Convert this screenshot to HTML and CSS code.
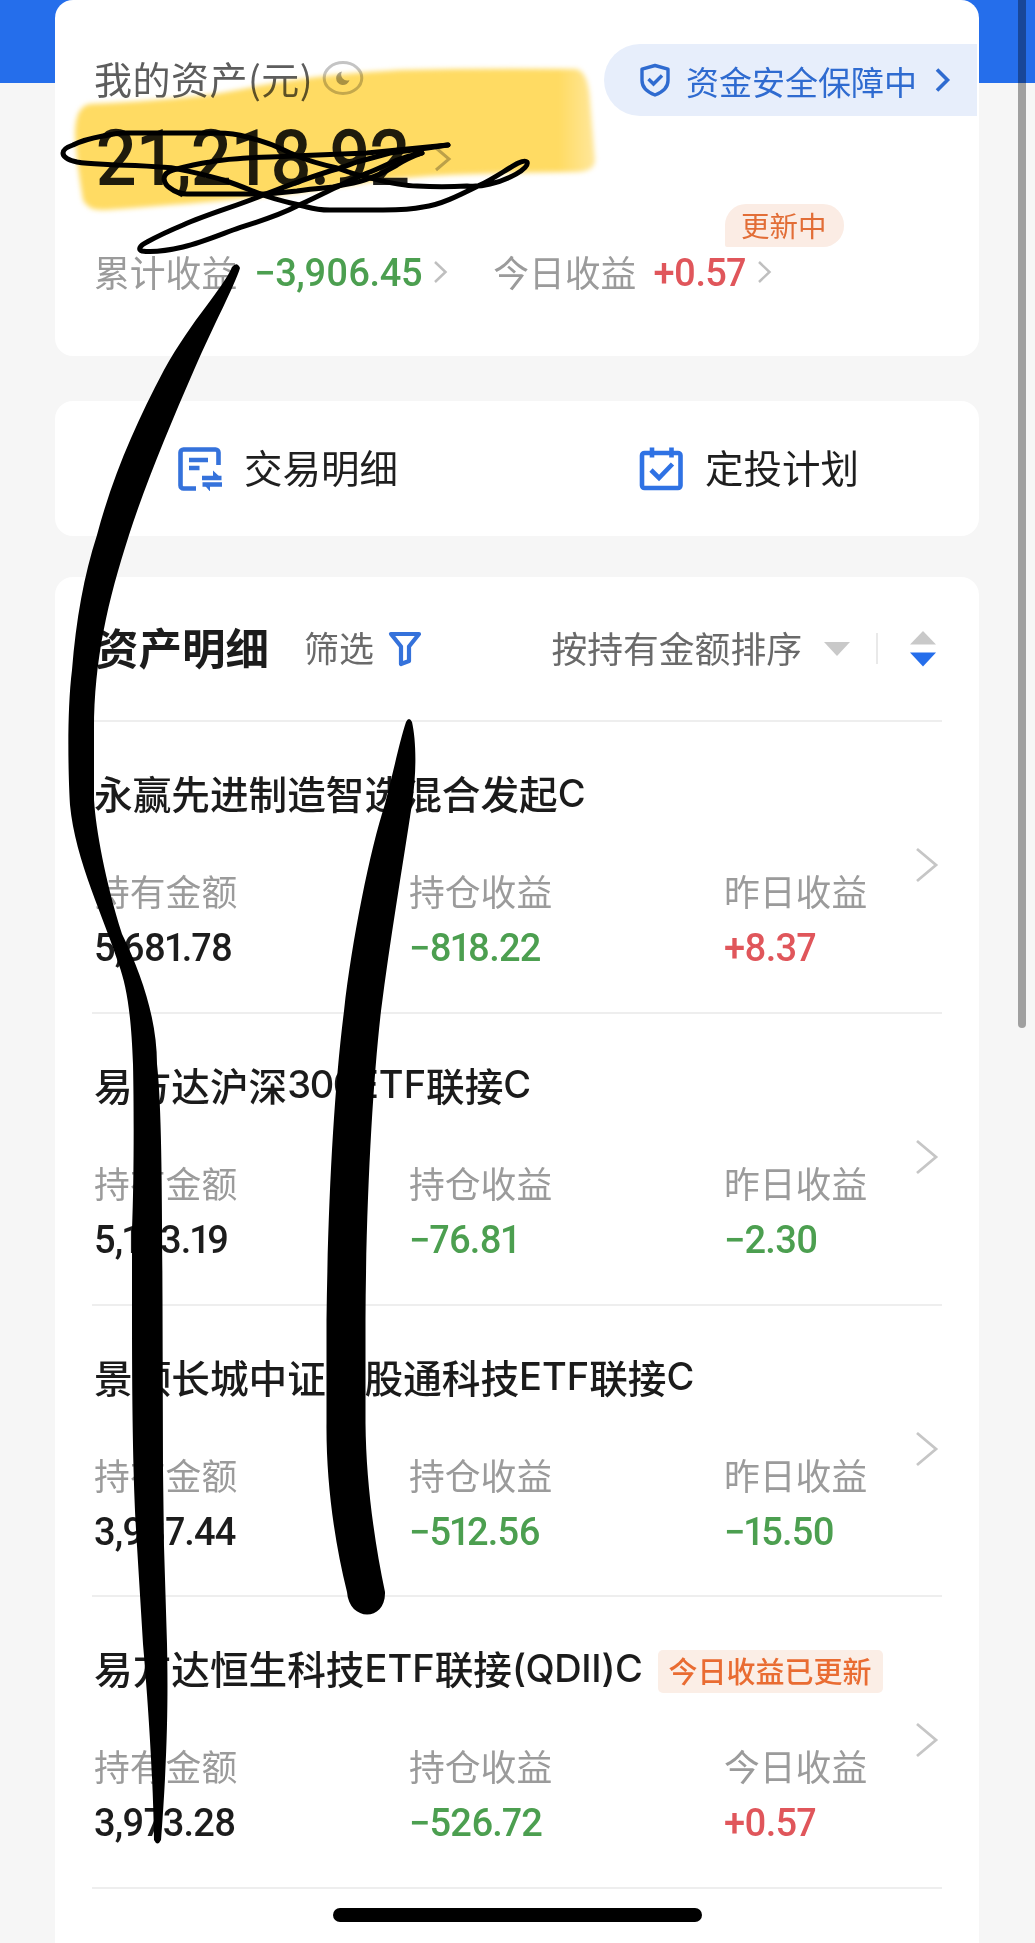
FILE: index.html
```html
<!DOCTYPE html>
<html lang="zh-CN">
<head>
<meta charset="utf-8">
<title>我的资产</title>
<link rel="stylesheet" href="styles.css">
</head>
<body>
<div class="screen">
  <main class="content">
    <section class="card summary">
      <div class="summary-top">
        <div class="total">
          <div class="total-label"><span>我的资产(元)</span>
            <svg class="eye" width="42" height="36" viewBox="0 0 42 36"><ellipse cx="21" cy="18" rx="18.8" ry="15.5" fill="none" stroke="#c4c4c4" stroke-width="3"/><path d="M20 11.500a6.800 6.800 0 1 0 7.500 8.500a6 6 0 0 1-7.500-8.500z" fill="#a9a9a9"/></svg>
          </div>
          <div class="total-value"><span class="big">21,218.92</span>
            <svg class="big-arrow" width="18" height="26" viewBox="0 0 18 26"><path d="M2 2l13 11L2 24" fill="none" stroke="#bbb" stroke-width="3"/></svg>
          </div>
        </div>
        <a class="safe">
          <svg width="32" height="34" viewBox="0 0 32 34" fill="none" stroke="#2f6bd0" stroke-width="3.400"><path d="M16 2.500l13 3.700v11.300c0 7-5 11.500-13 14.500C8 29 3 24.500 3 17.500V6.200z" stroke-linejoin="round"/><path d="M9.500 16l5 5 8.500-8.500"/></svg>
          <span>资金安全保障中</span>
          <svg class="safe-arrow" width="16" height="26" viewBox="0 0 16 26"><path d="M2 2.500l10.500 10.500L2 23.500" fill="none" stroke="#2f6bd0" stroke-width="3.600"/></svg>
        </a>
      </div>
      <div class="summary-row">
        <span class="label">累计收益</span><span class="num down total-gain">−3,906.45</span>
        <svg class="sm-arrow" width="15" height="24" viewBox="0 0 15 24"><path d="M2 2l10.500 10L2 22" fill="none" stroke="#bfbfbf" stroke-width="2.500"/></svg>
        <span class="label today">今日收益</span><span class="num up today-gain">+0.57<span class="bubble">更新中</span></span>
        <svg class="sm-arrow" width="15" height="24" viewBox="0 0 15 24"><path d="M2 2l10.500 10L2 22" fill="none" stroke="#bfbfbf" stroke-width="2.500"/></svg>
      </div>
    </section>

    <nav class="card actions">
      <a class="action">
        <svg width="44" height="44" viewBox="0 0 44 44" fill="none" stroke="#3572db" stroke-width="4.600"><path d="M18 41.500H5.500a3 3 0 0 1-3-3V5.500a3 3 0 0 1 3-3h32a3 3 0 0 1 3 3V18M11 13h19M11 21h10.500M24 31h19.500M24.500 37.500H44" /><path d="M35 23.500l8 7.500h-8zM32 44.500l-6-7h6z" fill="#3572db" stroke="none"/></svg>
        <span>交易明细</span>
      </a>
      <a class="action">
        <svg width="44" height="44" viewBox="0 0 44 44" fill="none" stroke="#2f72e4" stroke-width="4.600"><rect x="3" y="6" width="38.500" height="35" rx="2.500"/><path d="M13 .5v10M32.500 .5v10M12 23l8 8 13.500-14"/></svg>
        <span>定投计划</span>
      </a>
    </nav>

    <section class="card details">
      <header class="details-head">
        <h2>资产明细</h2>
        <span class="filter">筛选</span>
        <svg class="funnel" width="34" height="36" viewBox="0 0 34 36"><path d="M3 3h28L21 15.500V30l-8 3V15.500z" fill="none" stroke="#3572db" stroke-width="4.200" stroke-linejoin="round"/></svg>
        <span class="sort">按持有金额排序</span>
        <svg class="caret" width="26" height="14" viewBox="0 0 26 14"><path d="M0 0h26L13 14z" fill="#c9c9c9"/></svg>
        <i class="bar"></i>
        <svg class="updown" width="26" height="36" viewBox="0 0 26 36"><path d="M0 13.500L13 0l13 13.500z" fill="#c9c9c9"/><path d="M0 21.500h26L13 35.500z" fill="#256eeb"/></svg>
      </header>

      <article class="fund">
        <h3>永赢先进制造智选混合发起<b>C</b></h3>
        <dl>
          <div><dt>持有金额</dt><dd class="num">5,681.78</dd></div>
          <div><dt>持仓收益</dt><dd class="num down">−818.22</dd></div>
          <div><dt>昨日收益</dt><dd class="num up">+8.37</dd></div>
        </dl>
        <svg class="go" width="24" height="38" viewBox="0 0 24 38"><path d="M2 3l19 16L2 35" fill="none" stroke="#c6c6c6" stroke-width="2.800"/></svg>
      </article>
      <article class="fund">
        <h3>易方达沪深<b class="d">300</b><b>ETF</b>联接<b>C</b></h3>
        <dl>
          <div><dt>持有金额</dt><dd class="num">5,123.19</dd></div>
          <div><dt>持仓收益</dt><dd class="num down">−76.81</dd></div>
          <div><dt>昨日收益</dt><dd class="num down">−2.30</dd></div>
        </dl>
        <svg class="go" width="24" height="38" viewBox="0 0 24 38"><path d="M2 3l19 16L2 35" fill="none" stroke="#c6c6c6" stroke-width="2.800"/></svg>
      </article>
      <article class="fund">
        <h3>景顺长城中证港股通科技<b>ETF</b>联接<b>C</b></h3>
        <dl>
          <div><dt>持有金额</dt><dd class="num">3,987.44</dd></div>
          <div><dt>持仓收益</dt><dd class="num down">−512.56</dd></div>
          <div><dt>昨日收益</dt><dd class="num down">−15.50</dd></div>
        </dl>
        <svg class="go" width="24" height="38" viewBox="0 0 24 38"><path d="M2 3l19 16L2 35" fill="none" stroke="#c6c6c6" stroke-width="2.800"/></svg>
      </article>
      <article class="fund">
        <h3>易方达恒生科技<b>ETF</b>联接<b class="q">(QDII)C</b><span class="tag">今日收益已更新</span></h3>
        <dl>
          <div><dt>持有金额</dt><dd class="num">3,973.28</dd></div>
          <div><dt>持仓收益</dt><dd class="num down">−526.72</dd></div>
          <div><dt>今日收益</dt><dd class="num up">+0.57</dd></div>
        </dl>
        <svg class="go" width="24" height="38" viewBox="0 0 24 38"><path d="M2 3l19 16L2 35" fill="none" stroke="#c6c6c6" stroke-width="2.800"/></svg>
      </article>
    </section>
  </main>

  <!-- highlighter stroke over the total -->
  <svg class="marker" width="1035" height="260" viewBox="0 0 1035 260">
    <defs><linearGradient id="ink"><stop offset="0" stop-color="#ffdb63"/><stop offset=".93" stop-color="#ffdb63"/><stop offset="1" stop-color="#ffe79c"/></linearGradient></defs>
    <path d="M90 104Q160 101 215 94C270 84 300 76 400 70Q480 68 576 69Q588 71 590 100L595 160Q595 172 575 172C500 173 420 173 340 186C280 196 200 203 105 210Q88 211 83 200Q77 165 75 135Q75 106 90 104z" fill="url(#ink)"/>
  </svg>
  <!-- pen strokes -->
  <svg class="pen" width="1035" height="1943" viewBox="0 0 1035 1943">
    <g fill="none" stroke="#000" stroke-width="5" stroke-linecap="round" stroke-linejoin="round">
      <path d="M527 162C522 157 500 176 480 185C458 196 440 205 423 207C410 210 396 210 383 210H330C322 210 314 209 307 207C292 203 276 200 263 195C250 190 236 184 223 180C210 176 196 173 183 170C175 168 168 167 160 167C146 166 132 165 117 165C103 164 88 164 77 162C68 160 63 157 63 153C63 150 67 147 73 145C81 141 92 138 103 136C109 135 116 133 123 133H217C228 133 237 134 247 137C258 140 268 143 277 147C284 150 290 153 297 156C311 162 324 165 337 168C348 172 360 176 370 178C386 182 401 186 417 186C434 187 450 187 467 186Q479 187 490 184C507 180 530 169 527 162"/>
      <path d="M448 145L367 153L293 156C277 157 262 157 247 158C235 159 222 159 210 162C195 164 184 167 173 170C166 172 164 175 164 179Q165 185 170 188C175 192 180 194 187 194H267C277 193 287 192 297 191C309 189 322 188 333 187C346 184 359 183 370 178C380 175 388 170 397 165Q408 158 422 153"/>
      <path d="M448 145C430 148 409 150 390 153C379 156 368 159 357 162C351 164 344 167 337 169C312 176 287 186 263 195C237 206 210 213 183 225C171 230 158 236 147 242C139 246 138 250 142 251C156 253 170 250 183 247C200 243 217 236 233 230C256 222 276 217 297 206C311 200 324 193 337 187C348 181 358 177 370 172C380 168 388 164 397 160Q408 156 422 153"/>
    </g>
    <path d="M232 267Q237 261 240 268C235 285 215 322 194 370C170 425 145 485 129 535C108 600 94 660 94 730V800C96 830 105 880 122 934C142 975 157 1020 157 1064C162 1110 162 1200 162.500 1300L163 1470L164 1546L167 1644C168 1690 168 1750 161 1840Q157.500 1847 154 1840C153 1770 147 1690 143 1644L137 1546C134 1500 132 1440 132 1320V1230C134 1180 134 1110 133 1064C131 1010 126 985 119 965C105 920 75 860 70 805C68 770 67 710 72 670C76 620 84 575 97 535C113 475 136 423 164 370C193 318 222 290 232 267z"/>
    <path d="M406 722Q409 716 412 722C416 740 417 770 412 804C402 870 390 940 381 1011C373 1080 366 1200 365.500 1320V1423C366 1480 374 1540 385 1592C386 1622 349 1622 347 1592C334 1540 326 1480 326.500 1423V1320C328 1200 334 1090 344 1011C352 940 370 850 385 804C395 765 400 740 406 722z"/>
  </svg>
  <div class="scrollbar"></div>
  <div class="home"></div>
</div>
</body>
</html>
```
FILE: styles.css
```css
* { box-sizing: border-box; }
body { margin: 0; background: #f6f6f6; font-family: "Noto Sans CJK SC", sans-serif; }
svg { display: block; flex: none; }
.screen { position: relative; height: 1943px; overflow: hidden; background: linear-gradient(#256eeb 83px, #f6f6f6 83px); }
.content { display: flex; flex-direction: column; padding: 0 56px 0 55px; }
.card { background: #fff; border-radius: 18px; }
.num { font-family: Roboto, sans-serif; font-weight: 500; font-size: 38px; line-height: 44px; letter-spacing: -0.8px; font-feature-settings: "pnum"; white-space: nowrap; }
.up { color: #e0565b; }
.down { color: #4c9f50; }

.summary { height: 356px; padding: 44px 2px 0 39px; }
.summary-top { display: flex; justify-content: space-between; height: 205px; }
.total-label { display: flex; align-items: center; gap: 9px; height: 68px; font-size: 38px; line-height: 68px; letter-spacing: .5px; color: #5d5d5d; white-space: nowrap; }
.total-value { display: flex; align-items: center; height: 90px; color: #1f1f1f; }
.big { width: 340px; padding: 3px 0 0 2px; font: 500 78px/84px Roboto, sans-serif; letter-spacing: -1.200px; transform: scaleX(.925); transform-origin: left; }
.big-arrow { margin-top: 4px; }
.safe { display: flex; align-items: center; width: 373px; height: 72px; padding-left: 35px; border-radius: 36px 0 0 36px; background: #e7eefb; color: #2f6bd0; font-size: 33px; white-space: nowrap; }
.safe span { margin: 0 18px 0 15px; line-height: 70px; padding-top: 2px; }
.summary-row { display: flex; align-items: center; height: 46px; }
.label { font-size: 35.800px; line-height: 44px; padding-bottom: 2px; color: #9b9b9b; white-space: nowrap; }
.total-gain { width: 179px; margin-left: 17px; letter-spacing: -.4px; padding-top: 1px; }
.label.today { margin-left: 45px; }
.today-gain { position: relative; width: 104px; margin-left: 17px; letter-spacing: -.7px; padding-top: 1px; }
.bubble { position: absolute; left: 72px; top: -46px; width: 119px; height: 43px; border-radius: 21px 21px 21px 2px; background: #fbece4; color: #e26d36; font: 400 28.500px/41px "Noto Sans CJK SC", sans-serif; letter-spacing: 0; text-indent: -2px; text-align: center; }

.actions { display: flex; height: 135px; margin-top: 45px; }
.action { display: flex; align-items: center; gap: 22px; width: 461px; padding-left: 123px; font-size: 38.500px; color: #1f1f1f; }
.action span { line-height: 60px; padding-bottom: 5px; }

.details { height: 1400px; margin-top: 41px; padding: 0 37px; }
.details-head { display: flex; align-items: center; height: 145px; padding: 0 6px 0 3px; border-bottom: 2px solid #eee; white-space: nowrap; }
.details-head h2 { margin: 0; padding-bottom: 4px; font-size: 43.500px; font-weight: 700; color: #1c1c1c; }
.filter { margin-left: 35px; padding-bottom: 4px; font-size: 35px; color: #6a6a6a; }
.funnel { margin-left: 14px; }
.sort { margin-left: auto; padding-bottom: 4px; font-size: 35.800px; color: #6a6a6a; }
.caret { margin-left: 22px; }
.bar { width: 2px; height: 31px; margin: 0 32px 0 26px; background: #e9e9e9; }

.fund { position: relative; height: 291.800px; padding: 42px 0 0 2px; border-bottom: 2px solid #eee; }
.fund h3 { display: flex; align-items: center; margin: 0; height: 56px; font-size: 38.650px; line-height: 56px; font-weight: 500; color: #1b1b1b; white-space: nowrap; }
.fund b { font: 500 38px/56px Inter, sans-serif; padding-top: 1px; }
.fund .d { letter-spacing: -1.400px; }
.fund .q { letter-spacing: -.4px; }
.fund dl { display: grid; grid-template-columns: 315px 315px 1fr; margin: 46px 0 0; }
.fund dt { font-size: 35.800px; line-height: 48px; color: #9b9b9b; }
.fund dd { margin: 14px 0 0; line-height: 40px; }
.fund dd:not(.up):not(.down) { color: #1c1c1c; }
.go { position: absolute; right: 3px; top: 124px; }
.tag { width: 225px; height: 43px; margin: 9px 0 0 15px; border-radius: 5px; background: #fbeee6; color: #e96c32; font-size: 29px; font-weight: 500; line-height: 41px; text-align: center; }

.marker, .pen { position: absolute; left: 0; top: 0; }
.marker { mix-blend-mode: multiply; filter: blur(2.500px); }
.scrollbar { position: absolute; top: -8px; right: 9px; width: 8px; height: 1036px; border-radius: 4px; background: rgba(0, 0, 0, .35); }
.home { position: absolute; left: 333px; top: 1908px; width: 369px; height: 14px; border-radius: 7px; background: #000; }
```
